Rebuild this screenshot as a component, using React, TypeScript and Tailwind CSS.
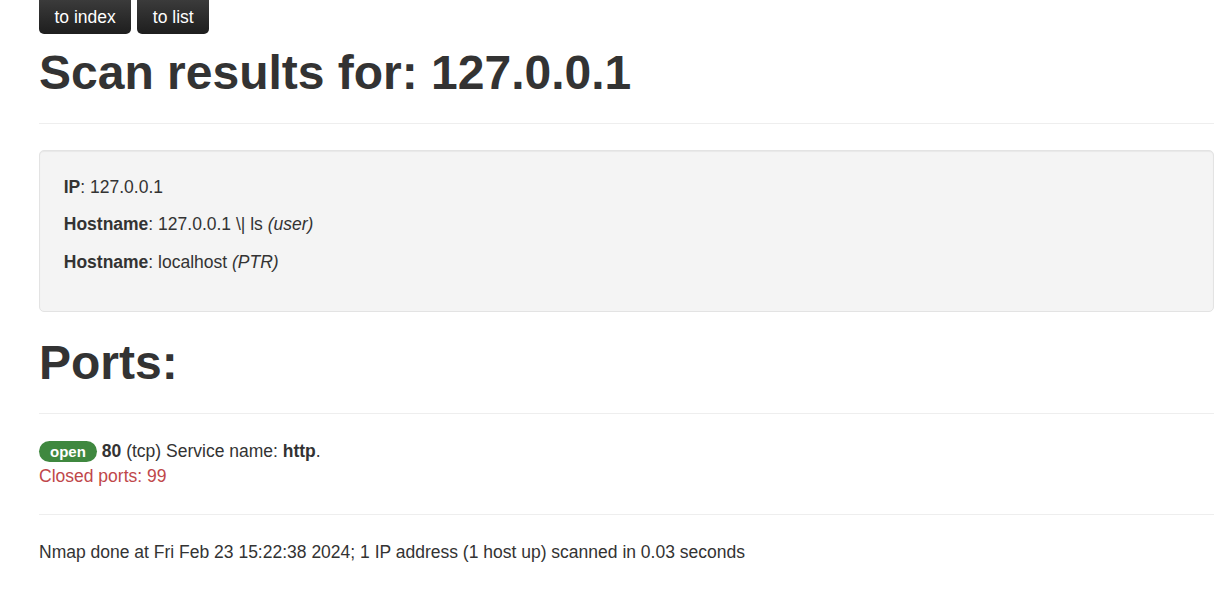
const App = () => {
  return (
    <div className="min-h-screen bg-white pl-[39px] pr-[15px] text-[17.5px] leading-[25px] text-[#333] font-['Liberation_Sans',Arial,sans-serif]">
      {/* Nav buttons */}
      <div className="flex gap-[6px]">
        <a
          href="#"
          className="flex h-[34px] items-center rounded-b-[5px] bg-gradient-to-b from-[#3b3b3b] to-[#1e1e1e] px-[15.5px] text-white"
        >
          to index
        </a>
        <a
          href="#"
          className="flex h-[34px] items-center rounded-b-[5px] bg-gradient-to-b from-[#3b3b3b] to-[#1e1e1e] px-[15.5px] text-white"
        >
          to list
        </a>
      </div>

      <h1 className="mt-[12.5px] text-[48px] leading-[52.8px] font-bold">
        Scan results for: 127.0.0.1
      </h1>
      <hr className="mt-[23.5px] mb-[26px] border-t border-[#eee]" />

      {/* Host info */}
      <div className="rounded-[5px] border border-[#e3e3e3] bg-[#f4f4f4] p-[23.75px] shadow-[inset_0_1px_1px_rgba(0,0,0,0.05)]">
        <p className="mb-[12.5px]">
          <b>IP</b>: 127.0.0.1
        </p>
        <p className="mb-[12.5px]">
          <b>Hostname</b>: 127.0.0.1 \| ls <i>(user)</i>
        </p>
        <p className="mb-[12.5px]">
          <b>Hostname</b>: localhost <i>(PTR)</i>
        </p>
      </div>

      <h1 className="mt-[25px] text-[48px] leading-[52.8px] font-bold">Ports:</h1>
      <hr className="mt-[23px] mb-[25px] border-t border-[#eee]" />

      <div className="flex items-center">
        <span className="mr-[5px] inline-flex h-[21px] items-center rounded-full bg-[#3f883f] px-[11px] text-[15px] leading-none font-bold text-white">
          open
        </span>
        <span>
          <b>80</b> (tcp) Service name: <b>http</b>.
        </span>
      </div>
      <div className="text-[#c0474a]">Closed ports: 99</div>

      <hr className="mt-[25px] mb-[25px] border-t border-[#eee]" />

      <p>
        Nmap done at Fri Feb 23 15:22:38 2024; 1 IP address (1 host up) scanned in 0.03 seconds
      </p>
    </div>
  );
};

export default App;
